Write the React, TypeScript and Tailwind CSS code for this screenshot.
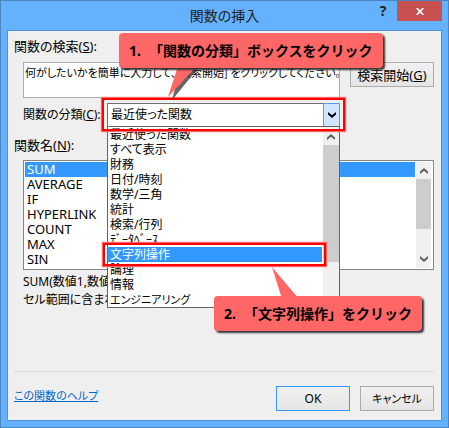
import type { ReactNode } from "react";

const functions = ["SUM", "AVERAGE", "IF", "HYPERLINK", "COUNT", "MAX", "SIN"];

const categories = [
  "最近使った関数",
  "すべて表示",
  "財務",
  "日付/時刻",
  "数学/三角",
  "統計",
  "検索/行列",
  "ﾃﾞｰﾀﾍﾞｰｽ",
  "文字列操作",
  "論理",
  "情報",
  "エンジニアリング"
];

function Chevron({ up = false, className = "" }: { up?: boolean; className?: string }) {
  return (
    <svg viewBox="0 0 8 6" className={`h-[6px] w-[8px] shrink-0 ${className}`} fill="currentColor">
      {up ? <path d="M4 0 8 3.6V6L4 2.7 0 6V3.6Z" /> : <path d="M4 6 8 2.4V0L4 3.3 0 0v2.4Z" />}
    </svg>
  );
}

function Callout({
  className,
  step,
  tail,
  children
}: {
  className: string;
  step: string;
  tail: ReactNode;
  children: ReactNode;
}) {
  return (
    <div className={`absolute z-30 ${className}`}>
      {tail}
      <p className="relative flex gap-[8px] rounded bg-[#ff6666] px-[10px] text-[14px] leading-[35px] font-bold whitespace-nowrap text-black shadow-[2px_2px_2px_#333] [font-feature-settings:normal]">
        <span>{step}</span>
        <span>{children}</span>
      </p>
    </div>
  );
}

export default function App() {
  return (
    <div className="relative flex min-h-screen flex-col border border-[#4c86c0] bg-[#64b1ff] px-[6px] pb-[6px] font-['Noto_Sans','Noto_Sans_CJK_JP',sans-serif] text-[13px] leading-[20px] text-black [font-feature-settings:'palt']">
      {/* Title bar */}
      <header className="relative flex h-[29px] shrink-0 justify-center">
        <h1 className="pt-[5px] text-[14px] leading-[20px] text-[#222]">関数の挿入</h1>
        <div className="absolute top-0 right-0 flex">
          <button aria-label="ヘルプ" className="h-[20px] w-[28px] font-['Open_Sans',sans-serif] text-[14px] leading-[20px] font-bold text-[#222]">
            ?
          </button>
          <button aria-label="閉じる" className="flex h-[20px] w-[45px] items-center justify-center bg-[#c75050] text-white">
            <svg viewBox="0 0 8 7" className="h-[7px] w-[8px]" stroke="currentColor" strokeWidth="1.7">
              <path d="M.7 0 7.3 7M7.3 0 .7 7" />
            </svg>
          </button>
        </div>
      </header>

      <main className="flex flex-1 flex-col border border-[#5093d8] bg-[#efefef] pt-[5px] pr-[7px] pb-[9px] pl-[6px]">
        <label htmlFor="search">
          関数の検索(<u>S</u>):
        </label>

        <div className="mt-[6px] ml-[9px] grid grid-cols-[1fr_84px] items-start gap-[10px]">
          <div className="flex min-w-0 flex-col gap-[5px]">
            <textarea
              id="search"
              className="block h-[36px] w-full resize-none overflow-hidden border border-[#abadb3] bg-white pl-px font-['Noto_Sans_CJK_JP',sans-serif] text-[11px] leading-[18px] whitespace-nowrap outline-none"
              defaultValue="何がしたいかを簡単に入力して、[検索開始] をクリックしてください。"
            />

            <div className="flex items-center">
              <label htmlFor="category" className="w-[84px] shrink-0 text-[12px] whitespace-nowrap">
                関数の分類(<u>C</u>):
              </label>
              <div className="relative min-w-0 flex-1 text-[12px]">
                <select
                  id="category"
                  className="block h-[24px] w-full appearance-none border border-[#707070] bg-white pl-[3px] outline-none"
                  defaultValue={categories[0]}
                >
                  {categories.map((name) => (
                    <option key={name}>{name}</option>
                  ))}
                </select>
                <span className="pointer-events-none absolute top-0 right-0 flex h-[24px] w-[17px] items-center justify-center border border-[#569de5] bg-[#cfe6fc]">
                  <Chevron />
                </span>
                <div className="pointer-events-none absolute -inset-x-[5px] -top-[5px] -bottom-[4px] z-20 border-2 border-[#ff0000] shadow-[0_0_1px_1px_#ff6666]" />

                {/* Open category list */}
                <div className="absolute top-[23px] right-0 left-0 z-10 flex border border-[#646464] bg-white">
                  <ul role="listbox" aria-label="関数の分類" className="min-w-0 flex-1">
                    {categories.map((name) => (
                      <li
                        key={name}
                        role="option"
                        aria-selected={name === "文字列操作"}
                        className={`relative h-[15px] pl-[2px] leading-[15px] aria-selected:bg-[#3399ff] aria-selected:text-white ${
                          name === "エンジニアリング" ? "text-[11px]" : ""
                        }`}
                      >
                        {name}
                        {name === "文字列操作" && (
                          <div className="absolute -inset-y-[4px] -right-[4px] -left-[5px] z-10 border-2 border-[#ff0000] shadow-[0_0_1px_1px_#ff6666]">
                            <div className="m-[2px] h-[15px] border border-dotted border-[#cc6600]" />
                          </div>
                        )}
                      </li>
                    ))}
                  </ul>
                  <div className="ml-px flex w-[16px] flex-col items-center bg-[#f0f0f0] pt-[7px] text-[#606060]">
                    <Chevron up />
                    <div className="mt-[5px] h-[117px] w-full bg-[#cdcdcd]" />
                  </div>
                </div>
              </div>
            </div>
          </div>

          <button className="h-[25px] border border-[#acacac] bg-linear-to-b from-[#f0f0f0] to-[#e5e5e5] leading-[22px] whitespace-nowrap">
            検索開始(<u>G</u>)
          </button>
        </div>

        <p id="function-label" className="mt-[8px]">
          関数名(<u>N</u>):
        </p>
        <div className="mt-[5px] ml-[9px] flex border border-[#828790] bg-white p-px">
          <ul role="listbox" aria-labelledby="function-label" className="flex-1 pb-px">
            {functions.map((name) => (
              <li
                key={name}
                role="option"
                aria-selected={name === "SUM"}
                className="h-[15px] pl-[2px] leading-[15px] aria-selected:bg-[#3399ff] aria-selected:text-white"
              >
                {name}
              </li>
            ))}
          </ul>
          <div className="mr-px ml-px flex w-[15px] flex-col items-center bg-[#f0f0f0] py-[6px] text-[#606060]">
            <Chevron up />
            <div className="mt-[5px] h-[50px] w-full bg-[#cdcdcd]" />
            <Chevron className="mt-auto" />
          </div>
        </div>

        <div className="mt-[3px] ml-[9px] overflow-hidden text-[12px] leading-[18px] whitespace-nowrap">
          <p>SUM(数値1,数値2,...)</p>
          <p>セル範囲に含まれる数値をすべて合計します。</p>
        </div>

        {/* Footer */}
        <footer className="mt-auto flex items-start gap-[10px] border-t border-[#dcdcdc] pt-[14px]">
          <a href="#help" className="mr-auto text-[11px] leading-[19px] text-[#0066cc] underline">
            この関数のヘルプ
          </a>
          <button className="h-[25px] w-[74px] border border-[#3399ff] bg-linear-to-b from-[#f0f0f0] to-[#e5e5e5] text-[12px] leading-[22px]">
            OK
          </button>
          <button className="h-[25px] w-[74px] border border-[#acacac] bg-linear-to-b from-[#f0f0f0] to-[#e5e5e5] text-[11px] leading-[22px]">
            キャンセル
          </button>
        </footer>
      </main>

      <Callout
        className="top-[32px] left-[118px]"
        step="1."
        tail={
          <svg viewBox="0 0 40 36" className="absolute top-[33px] left-[46px] h-[36px] w-[40px]">
            <path d="M16 0H35L7 34Z" fill="#333" opacity=".75" />
            <path d="M13 0H32L3 31Z" fill="#ff6666" />
          </svg>
        }
      >
        「関数の分類」ボックスをクリック
      </Callout>
      <Callout
        className="top-[295px] left-[213px]"
        step="2."
        tail={
          <svg viewBox="0 0 30 32" className="absolute -top-[29px] left-[56px] h-[32px] w-[30px]">
            <path d="M2 0 29 32H12Z" fill="#ff6666" />
          </svg>
        }
      >
        「文字列操作」をクリック
      </Callout>
    </div>
  );
}
